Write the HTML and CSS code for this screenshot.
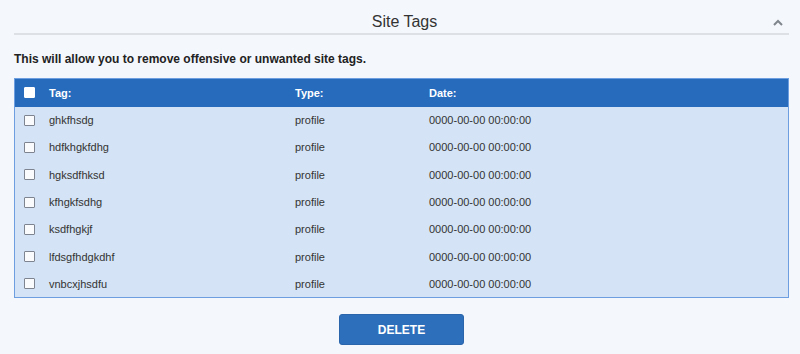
FILE: index.html
```html
<!DOCTYPE html>
<html>
<head>
<meta charset="utf-8">
<link rel="stylesheet" href="styles.css">
</head>
<body>
<div class="panel">
  <div class="panel-head">
    <h2 class="panel-title">Site Tags</h2>
    <svg class="chevron" width="10" height="7" viewBox="0 0 10 7"><path d="M1 6 L5 2 L9 6" fill="none" stroke="#80868d" stroke-width="2"/></svg>
  </div>
  <p class="intro">This will allow you to remove offensive or unwanted site tags.</p>
  <table class="tags">
    <thead>
      <tr><th class="c-check"><span class="box box-head"></span></th><th class="c-tag">Tag:</th><th class="c-type">Type:</th><th class="c-date">Date:</th></tr>
    </thead>
    <tbody>
      <tr><td class="c-check"><span class="box"></span></td><td>ghkfhsdg</td><td>profile</td><td>0000-00-00 00:00:00</td></tr>
      <tr><td class="c-check"><span class="box"></span></td><td>hdfkhgkfdhg</td><td>profile</td><td>0000-00-00 00:00:00</td></tr>
      <tr><td class="c-check"><span class="box"></span></td><td>hgksdfhksd</td><td>profile</td><td>0000-00-00 00:00:00</td></tr>
      <tr><td class="c-check"><span class="box"></span></td><td>kfhgkfsdhg</td><td>profile</td><td>0000-00-00 00:00:00</td></tr>
      <tr><td class="c-check"><span class="box"></span></td><td>ksdfhgkjf</td><td>profile</td><td>0000-00-00 00:00:00</td></tr>
      <tr><td class="c-check"><span class="box"></span></td><td>lfdsgfhdgkdhf</td><td>profile</td><td>0000-00-00 00:00:00</td></tr>
      <tr><td class="c-check"><span class="box"></span></td><td>vnbcxjhsdfu</td><td>profile</td><td>0000-00-00 00:00:00</td></tr>
    </tbody>
  </table>
  <div class="actions"><button class="btn-delete">DELETE</button></div>
</div>
</body>
</html>
```
FILE: styles.css
```css
html, body { margin: 0; padding: 0; }
body {
  background: #f4f7fc;
  font-family: "Liberation Sans", Arial, sans-serif;
  color: #333;
  width: 800px;
  height: 354px;
  overflow: hidden;
}
.panel { padding: 0 11px 0 14px; }
.panel-head {
  position: relative;
  height: 33px;
  border-bottom: 2px solid #dde1e6;
  display: flex;
  align-items: center;
  justify-content: center;
}
.panel-title {
  margin: 0;
  padding-top: 10px;
  font-size: 16px;
  font-weight: normal;
  color: #333;
  position: relative;
  left: 3px;
}
.chevron { position: absolute; right: 6px; top: 19px; }
.intro {
  margin: 17px 0 0 0;
  font-size: 12px;
  font-weight: bold;
  color: #222;
  line-height: 15px;
}
.tags {
  margin-top: 11px;
  width: 100%;
  border-collapse: collapse;
  border: 1px solid #6d9fe0;
  background: #d4e3f5;
  font-size: 11px;
}
.tags thead tr { background: #276bbd; color: #fff; height: 28px; }
.tags th { text-align: left; font-weight: bold; padding: 0; }
.tags td { padding: 0; color: #333; }
.tags tbody tr { height: 27.3px; }
.c-check { width: 25px; padding-left: 9px !important; }
.c-tag { width: 246px; }
.c-type { width: 134px; }
.box {
  display: block;
  width: 9px;
  height: 9px;
  border: 1px solid #7f8590;
  background: #fafbfd;
  border-radius: 1px;
}
.box-head { background: #fff; border-color: #fff; }
.actions { display: flex; justify-content: center; margin-top: 16px; }
.btn-delete {
  width: 125px;
  height: 31px;
  border: 1px solid #2a64ab;
  border-radius: 3px;
  background: #2e6fbb;
  color: #fff;
  font-family: "Liberation Sans", Arial, sans-serif;
  font-size: 12px;
  font-weight: bold;
  padding: 0;
}
```
